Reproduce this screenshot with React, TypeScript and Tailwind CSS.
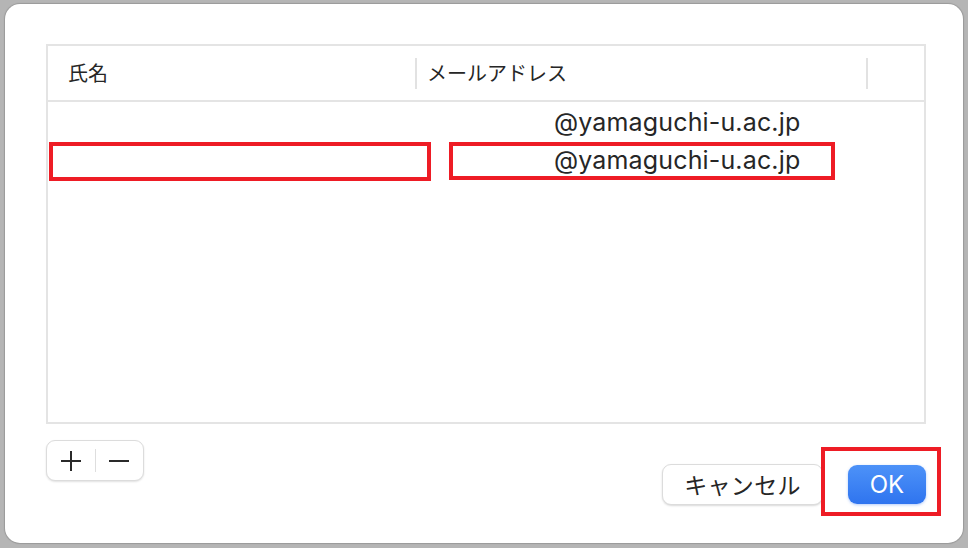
import React from "react";

const jp = { fontFamily: '"Noto Sans CJK JP", "Noto Sans", sans-serif' };
const latin = { fontFamily: 'Inter, "Noto Sans CJK JP", sans-serif' };

export default function App() {
  return (
    <div className="w-[968px] h-[548px] bg-[#b5b5b5] pt-[4px] pl-[5px] overflow-hidden">
      <div className="w-[958px] h-[539px] bg-white rounded-[15px] pl-[41px] pt-[40px] pr-[37px] shadow-[0_0_1px_1px_rgba(0,0,0,0.15)]">
        {/* table */}
        <div className="relative w-[880px] h-[380px] border-2 border-[#e4e4e4] bg-white">
          <div className="flex items-center h-[56px] border-b-2 border-[#e4e4e4] text-[#262626]" style={jp}>
            <div className="w-[367px] pl-[20px] text-[20px] leading-none">氏名</div>
            <div className="w-[2px] h-[31px] bg-[#e2e2e2]" />
            <div className="w-[449px] pl-[10px] text-[20px] leading-none">メールアドレス</div>
            <div className="w-[2px] h-[31px] bg-[#e2e2e2]" />
          </div>
          <div className="flex flex-col pt-[1px] text-[#262626]" style={latin}>
            <div className="h-[38px] flex items-center pl-[506px] text-[25px] tracking-[0.15px] leading-none">@yamaguchi-u.ac.jp</div>
            <div className="h-[38px] flex items-center pl-[506px] text-[25px] tracking-[0.15px] leading-none">@yamaguchi-u.ac.jp</div>
          </div>
          {/* annotation boxes */}
          <div className="absolute left-[1px] top-[96px] w-[382px] h-[39px] border-[4px] border-[#ee1c25]" />
          <div className="absolute left-[401px] top-[96px] w-[386px] h-[38px] border-[4px] border-[#ee1c25]" />
        </div>

        {/* bottom row */}
        <div className="flex justify-between items-start mt-[16px] w-[880px]">
          <div className="flex items-center w-[98px] h-[41px] rounded-[9px] bg-white border border-[#dcdcdc] shadow-[0_1px_2px_rgba(0,0,0,0.12)]">
            <div className="w-[48px] flex justify-center">
              <svg width="22" height="22" viewBox="0 0 22 22">
                <path d="M11 1v20M1 11h20" stroke="#2a2a2a" strokeWidth="2" />
              </svg>
            </div>
            <div className="w-[1px] h-[23px] bg-[#dedede]" />
            <div className="flex-1 flex justify-center pr-[2px]">
              <svg width="22" height="22" viewBox="0 0 22 22">
                <path d="M1 11h20" stroke="#2a2a2a" strokeWidth="2" />
              </svg>
            </div>
          </div>

          <div className="flex items-center gap-[25px] mt-[24px] mr-[0px]">
            <div
              className="w-[161px] h-[41px] rounded-[9px] bg-white border border-[#dcdcdc] shadow-[0_1px_2px_rgba(0,0,0,0.15)] flex items-center justify-center text-[23px] tracking-[0.3px] text-[#262626] leading-none"
              style={jp}
            >
              キャンセル
            </div>
            <div className="relative">
              <div
                className="w-[78px] h-[39px] rounded-[9px] bg-gradient-to-b from-[#4d92f8] to-[#2f74ef] shadow-[0_1px_3px_rgba(40,110,240,0.35)] flex items-center justify-center text-[24px] text-white leading-none"
                style={latin}
              >
                OK
              </div>
              <div className="absolute left-[-27px] top-[-18px] w-[120px] h-[69px] border-[4px] border-[#ee1c25]" />
            </div>
          </div>
        </div>
      </div>
    </div>
  );
}
